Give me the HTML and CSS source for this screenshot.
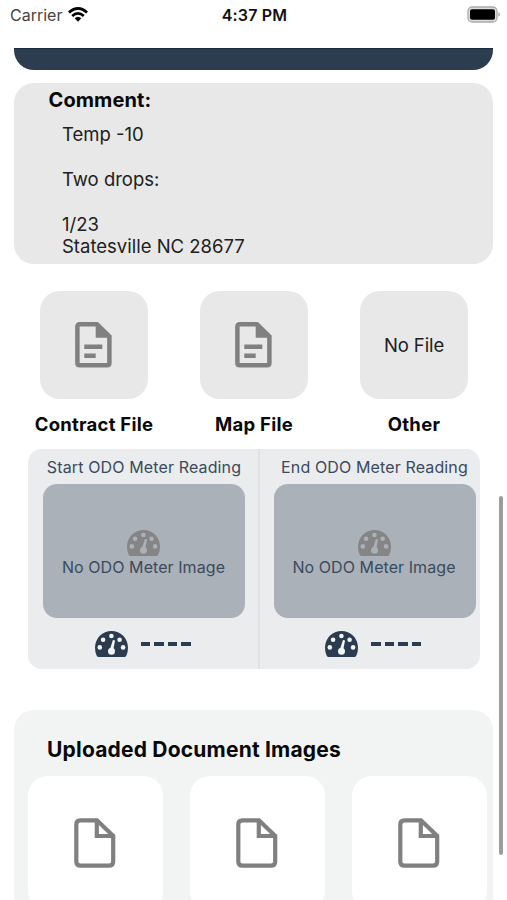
FILE: index.html
```html
<!DOCTYPE html>
<html lang="en">
<head>
<meta charset="utf-8">
<title>Load details</title>
<link rel="stylesheet" href="styles.css">
</head>
<body>
<svg class="defs" aria-hidden="true">
  <symbol id="doc" viewBox="0 0 37 46">
    <path d="M4.7 2.3H22L34.4 14.5V41Q34.4 43.3 32.1 43.3H4.7Q2.4 43.3 2.4 41V4.6Q2.4 2.3 4.7 2.3Z" fill="none" stroke="currentColor" stroke-width="4.5"/>
    <path d="M20.7 3V15.8H35L22.5 2.5Z" fill="currentColor"/>
    <path d="M9.3 24.8H27.3M9.3 33.8H20.7" stroke="currentColor" stroke-width="4.5"/>
  </symbol>
  <symbol id="page" viewBox="0 0 42 50">
    <path d="M6.5 2.3H23L39.2 18V43.5Q39.2 47.7 35 47.7H6.5Q2.3 47.7 2.3 43.5V6.5Q2.3 2.3 6.5 2.3ZM22.8 3V18H38.6" fill="none" stroke="currentColor" stroke-width="4.2"/>
  </symbol>
  <symbol id="gauge" viewBox="0 0 33 26">
    <path fill="currentColor" d="M3.2 26Q2.2 26 1.6 24.6Q0 21 0 16.5A16.5 16.5 0 0 1 33 16.5Q33 21 31.4 24.6Q30.8 26 29.8 26Z"/>
    <g class="holes"><circle cx="4.8" cy="16.4" r="2.3"/><circle cx="8.1" cy="8.7" r="2.3"/><circle cx="16.4" cy="5" r="2.3"/><circle cx="24.6" cy="8.7" r="2.3"/><circle cx="28.1" cy="16.4" r="2.3"/><circle cx="16.5" cy="20.3" r="3.5"/><path d="M14.9 18.5L17.8 9.3Q19.8 8.5 19.9 10.2L18.2 19Z"/></g>
  </symbol>
</svg>
<header class="status">
  <div class="carrier">Carrier
    <svg class="wifi" viewBox="0 0 20 15"><g fill="none" stroke="#000" stroke-width="2.7"><path d="M.9 5.5Q10-2.6 19.1 5.5"/><path d="M4.2 9Q10 3.8 15.8 9"/></g><path d="M6.7 11.2Q10 8.2 13.3 11.2L10 14.7Z"/></svg>
  </div>
  <div class="time">4:37 PM</div>
  <svg class="battery" viewBox="0 0 33 17"><rect x="1" y="1" width="29" height="15" rx="4.3" fill="#ddd" stroke="#aaa" stroke-width="1.3"/><rect x="3" y="3.2" width="25" height="10.6" rx="2"/><path d="M31.3 6.3Q33 7 33 8.5T31.3 10.7Z" fill="#aaa"/></svg>
</header>
<main>
  <div class="banner"></div>
  <section class="comment">
    <h2>Comment:</h2>
    <p>Temp -10

Two drops:

1/23
Statesville NC 28677</p>
  </section>
  <section class="files">
    <div class="file"><div class="tile"><svg class="doc"><use href="#doc"/></svg></div><b>Contract File</b></div>
    <div class="file"><div class="tile"><svg class="doc"><use href="#doc"/></svg></div><b>Map File</b></div>
    <div class="file"><div class="tile">No File</div><b>Other</b></div>
  </section>
  <section class="odo">
    <div class="meter">
      <h3>Start ODO Meter Reading</h3>
      <div class="photo"><svg class="gauge"><use href="#gauge"/></svg><span>No ODO Meter Image</span></div>
      <div class="reading"><svg class="gauge"><use href="#gauge"/></svg><span class="dashes"><i></i><i></i><i></i><i></i></span></div>
    </div>
    <div class="meter">
      <h3>End ODO Meter Reading</h3>
      <div class="photo"><svg class="gauge"><use href="#gauge"/></svg><span>No ODO Meter Image</span></div>
      <div class="reading"><svg class="gauge"><use href="#gauge"/></svg><span class="dashes"><i></i><i></i><i></i><i></i></span></div>
    </div>
  </section>
  <section class="uploads">
    <h2>Uploaded Document Images</h2>
    <div class="pages">
      <div class="page"><svg><use href="#page"/></svg></div>
      <div class="page"><svg><use href="#page"/></svg></div>
      <div class="page"><svg><use href="#page"/></svg></div>
    </div>
  </section>
</main>
<div class="scrollbar"></div>
</body>
</html>
```
FILE: styles.css
```css
* { box-sizing: border-box; margin: 0; padding: 0; }
body { width: 507px; height: 900px; overflow: hidden; background: #fff; color: #080808; font-family: Inter, sans-serif; }
svg { display: block; flex: none; }
.defs { position: absolute; width: 0; height: 0; }
.status { height: 48px; padding: 5px 7px 0 10px; display: grid; grid-template-columns: 1fr auto 1fr; align-items: start; line-height: 20px; font-size: 16px; }
.carrier { display: flex; gap: 6px; color: #444; }
.wifi { width: 20px; height: 15px; margin-top: 2px; }
.time { font-weight: 600; letter-spacing: .2px; margin-right: 1px; color: #111; }
.battery { width: 33px; height: 17px; justify-self: end; margin-top: 1px; }
main { padding: 0 14px; }
.banner { height: 22px; background: #2d3d50; border-radius: 0 0 20px 20px; border-top: 1px solid #1b2b40; }
.comment { margin-top: 13px; height: 181px; border-radius: 20px; background: #e8e8e8; padding: 5px 0 0 34.5px; }
h2 { font-size: 20px; line-height: 24px; font-weight: 650; letter-spacing: .1px; white-space: nowrap; }
.comment p { margin: 10.5px 0 0 13.5px; font-size: 18.5px; line-height: 22.5px; white-space: pre; color: #202020; }
.files { display: flex; gap: 52px; margin: 27px 0 0 26px; }
.file { width: 108px; display: flex; flex-direction: column; align-items: center; }
.tile { width: 108px; height: 108px; border-radius: 20px; background: #e8e8e8; display: flex; align-items: center; justify-content: center; font-size: 18.5px; letter-spacing: -.1px; color: #202020; padding-bottom: 1px; }
.doc { width: 37px; height: 46px; color: #808080; margin-right: 2px; }
.file b { margin-top: 13px; font-size: 18.5px; line-height: 24px; font-weight: 650; letter-spacing: .25px; white-space: nowrap; }
.odo { margin: 13px 0 0 14px; width: 452px; height: 220px; border-radius: 14px; background: #eaecee; display: grid; grid-template-columns: 232px 220px; }
.meter { padding-left: 15px; width: 217px; }
.meter:first-child { border-right: 2px solid #dfe1e4; width: 232px; }
.meter + .meter { padding-left: 13.5px; }
.meter h3 { width: 202px; height: 34.5px; padding-top: 8px; font-size: 16px; letter-spacing: .13px; line-height: 20px; font-weight: 400; text-align: center; white-space: nowrap; color: #3b4a5c; }
.photo { width: 202px; height: 134.5px; border-radius: 14px; background: #abb1b9; color: #858585; display: flex; flex-direction: column; align-items: center; padding: 46px 1px 0 0; --hole: #abb1b9; }
.photo span { font-size: 16px; line-height: 22px; letter-spacing: .07px; color: #3b4a5c; white-space: nowrap; }
.gauge { width: 33px; height: 26px; }
.holes { fill: var(--hole); }
.reading { display: flex; align-items: center; color: #2b3c50; margin: 12.5px 0 0 51.5px; gap: 13px; --hole: #f3f5f6; }
.dashes { display: flex; gap: 4px; padding-top: 1px; }
.dashes i { width: 9.6px; height: 4px; background: #2b3c50; }
.uploads { margin-top: 41px; height: 210px; border-radius: 20px; background: #f2f4f4; padding: 28px 6px 0 14px; }
.uploads h2 { margin-left: 19px; font-size: 21px; letter-spacing: .2px; }
.pages { margin-top: 14px; display: flex; justify-content: space-between; }
.page { width: 135px; height: 135px; background: #fff; border-radius: 20px; display: flex; align-items: center; justify-content: center; color: #808080; padding: 0 1px 1px 0; }
.page svg { width: 42px; height: 50px; }
.scrollbar { position: absolute; left: 499px; top: 496px; width: 4px; height: 359px; border-radius: 2px; background: #9c9c9c; }
```
